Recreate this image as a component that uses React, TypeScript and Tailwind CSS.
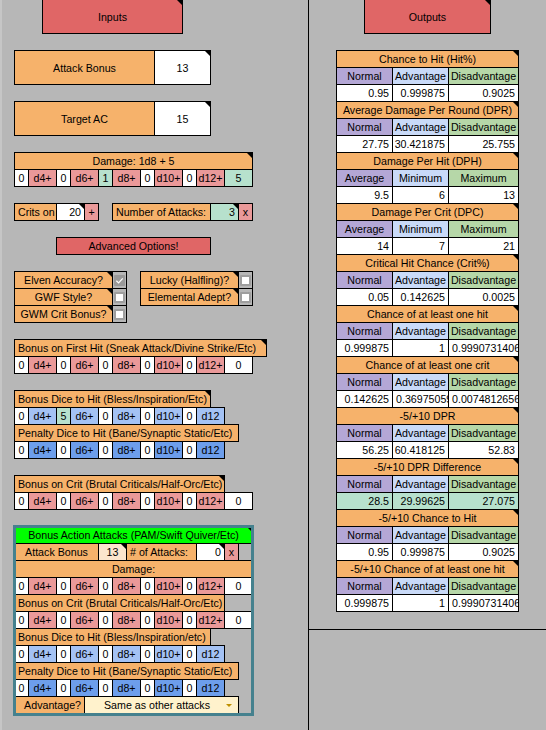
import React from 'react';

type Align = 'left' | 'center' | 'right';

type CellProps = {
  w: string;
  bg?: string;
  align?: Align;
  tall?: boolean;
  note?: boolean;
  children?: React.ReactNode;
};

// comment marker in the top-right corner of a cell
function Note() {
  return <span className="absolute right-0 top-0 h-0 w-0 border-l-[5px] border-t-[5px] border-l-transparent border-t-black" />;
}

// widths carry +1px so neighbouring borders overlap like sheet gridlines
function Cell({ w, bg = 'bg-white', align = 'center', tall, note, children }: CellProps) {
  const justify = align === 'left' ? 'justify-start' : align === 'right' ? 'justify-end' : 'justify-center';
  return (
    <div
      className={`relative -mr-px flex shrink-0 items-center overflow-hidden whitespace-nowrap border border-black px-[3px] pt-px ${tall ? 'h-[35px]' : 'h-[18px]'} ${w} ${bg} ${justify}`}
    >
      {children}
      {note && <Note />}
    </div>
  );
}

function Check({ checked }: { checked?: boolean }) {
  return (
    <div className="-mr-px flex h-[18px] w-[15px] shrink-0 items-center justify-center border border-black">
      {checked ? (
        <div className="flex h-[11px] w-[11px] items-center justify-center rounded-[1px] bg-[#999999]">
          <svg viewBox="0 0 10 10" className="h-[9px] w-[9px]">
            <path d="M1.5 5.2 L4 7.6 L8.6 2.6" stroke="white" strokeWidth="1.4" fill="none" />
          </svg>
        </div>
      ) : (
        <div className="h-[11px] w-[11px] rounded-[1px] border-2 border-[#9e9e9e] bg-white" />
      )}
    </div>
  );
}

const valBg = (v: string) => (v === '0' ? 'bg-white' : 'bg-[#b7e1cd]');

function DiceRow({ vals, dice, diceBg, last }: { vals: string[]; dice: string[]; diceBg: string; last?: string }) {
  return (
    <div className="flex h-[17px]">
      {dice.map((d, i) => (
        <React.Fragment key={d}>
          <Cell w="w-[15px]" bg={valBg(vals[i])}>{vals[i]}</Cell>
          <Cell w="w-[29px]" bg={diceBg}>{d}</Cell>
        </React.Fragment>
      ))}
      {last !== undefined && <Cell w="w-[29px]" bg={valBg(last)}>{last}</Cell>}
    </div>
  );
}

const DMG = ['d4+', 'd6+', 'd8+', 'd10+', 'd12+'];
const HIT = ['d4+', 'd6+', 'd8+', 'd10+', 'd12'];
const ZEROS = ['0', '0', '0', '0', '0'];

const Gap = () => <div className="h-[17px] shrink-0" />;

type Out = {
  title: string;
  heads: string[];
  values: { v: string; left?: boolean }[];
  mint?: boolean;
};

const NAD = ['Normal', 'Advantage', 'Disadvantage'];
const AMM = ['Average', 'Minimum', 'Maximum'];

const outputs: Out[] = [
  { title: 'Chance to Hit (Hit%)', heads: NAD, values: [{ v: '0.95' }, { v: '0.999875' }, { v: '0.9025' }] },
  { title: 'Average Damage Per Round (DPR)', heads: NAD, values: [{ v: '27.75' }, { v: '30.421875' }, { v: '25.755' }] },
  { title: 'Damage Per Hit (DPH)', heads: AMM, values: [{ v: '9.5' }, { v: '6' }, { v: '13' }] },
  { title: 'Damage Per Crit (DPC)', heads: AMM, values: [{ v: '14' }, { v: '7' }, { v: '21' }] },
  { title: 'Critical Hit Chance (Crit%)', heads: NAD, values: [{ v: '0.05' }, { v: '0.142625' }, { v: '0.0025' }] },
  { title: 'Chance of at least one hit', heads: NAD, values: [{ v: '0.999875' }, { v: '1' }, { v: '0.9990731406', left: true }] },
  {
    title: 'Chance of at least one crit',
    heads: NAD,
    values: [{ v: '0.142625' }, { v: '0.3697505926', left: true }, { v: '0.0074812656', left: true }],
  },
  { title: '-5/+10 DPR', heads: NAD, values: [{ v: '56.25' }, { v: '60.418125' }, { v: '52.83' }] },
  { title: '-5/+10 DPR Difference', heads: NAD, values: [{ v: '28.5' }, { v: '29.99625' }, { v: '27.075' }], mint: true },
  { title: '-5/+10 Chance to Hit', heads: NAD, values: [{ v: '0.95' }, { v: '0.999875' }, { v: '0.9025' }] },
  { title: '-5/+10 Chance of at least one hit', heads: NAD, values: [{ v: '0.999875' }, { v: '1' }, { v: '0.9990731406', left: true }] },
];

function OutTable({ t }: { t: Out }) {
  const bg = t.mint ? 'bg-[#b7e1cd]' : 'bg-white';
  return (
    <>
      <div className="flex h-[17px]">
        <Cell w="w-[183px]" bg="bg-[#f6b26b]" note>{t.title}</Cell>
      </div>
      <div className="flex h-[17px]">
        <Cell w="w-[57px]" bg="bg-[#b4a7d6]">{t.heads[0]}</Cell>
        <Cell w="w-[57px]" bg="bg-[#c9daf8]">{t.heads[1]}</Cell>
        <Cell w="w-[71px]" bg="bg-[#b6d7a8]">{t.heads[2]}</Cell>
      </div>
      <div className="flex h-[17px]">
        <Cell w="w-[57px]" bg={bg} align={t.values[0].left ? 'left' : 'right'}>{t.values[0].v}</Cell>
        <Cell w="w-[57px]" bg={bg} align={t.values[1].left ? 'left' : 'right'}>{t.values[1].v}</Cell>
        <Cell w="w-[71px]" bg={bg} align={t.values[2].left ? 'left' : 'right'}>{t.values[2].v}</Cell>
      </div>
    </>
  );
}

export default function App() {
  const orange = 'bg-[#f6b26b]';
  const pink = 'bg-[#ea9999]';
  return (
    <div className="flex h-[730px] w-[546px] overflow-hidden border-l-2 border-[#c6c6c6] bg-[#b7b7b7] font-['Liberation_Sans',Arial,sans-serif] text-[10.67px] leading-none text-black">
      {/* Inputs */}
      <div className="-mt-px flex w-[306px] shrink-0 flex-col pl-[12px]">
        <div className="flex h-[34px] pl-[28px]">
          <Cell w="w-[141px]" bg="bg-[#e06666]" tall note>Inputs</Cell>
        </div>
        <Gap />
        <div className="flex h-[34px]">
          <Cell w="w-[141px]" bg={orange} tall>Attack Bonus</Cell>
          <Cell w="w-[57px]" tall note>13</Cell>
        </div>
        <Gap />
        <div className="flex h-[34px]">
          <Cell w="w-[141px]" bg={orange} tall>Target AC</Cell>
          <Cell w="w-[57px]" tall note>15</Cell>
        </div>
        <Gap />
        <div className="flex h-[17px]">
          <Cell w="w-[239px]" bg={orange} note>Damage: 1d8 + 5</Cell>
        </div>
        <DiceRow vals={['0', '0', '1', '0', '0']} dice={DMG} diceBg={pink} last="5" />
        <Gap />
        <div className="flex h-[17px]">
          <Cell w="w-[43px]" bg={orange} align="left">Crits on</Cell>
          <Cell w="w-[29px]" align="right" note>20</Cell>
          <Cell w="w-[15px]" bg={pink}>+</Cell>
          <div className="w-[14px] shrink-0" />
          <Cell w="w-[99px]" bg={orange} align="left">Number of Attacks:</Cell>
          <Cell w="w-[29px]" bg="bg-[#b7e1cd]" align="right" note>3</Cell>
          <Cell w="w-[15px]" bg={pink}>x</Cell>
        </div>
        <Gap />
        <div className="flex h-[17px] pl-[42px]">
          <Cell w="w-[155px]" bg="bg-[#e06666]">Advanced Options!</Cell>
        </div>
        <Gap />
        <div className="flex h-[17px]">
          <Cell w="w-[99px]" bg={orange} note>Elven Accuracy?</Cell>
          <Check checked />
          <div className="w-[14px] shrink-0" />
          <Cell w="w-[99px]" bg={orange} note>Lucky (Halfling)?</Cell>
          <Check />
        </div>
        <div className="flex h-[17px]">
          <Cell w="w-[99px]" bg={orange} note>GWF Style?</Cell>
          <Check />
          <div className="w-[14px] shrink-0" />
          <Cell w="w-[99px]" bg={orange} note>Elemental Adept?</Cell>
          <Check />
        </div>
        <div className="flex h-[17px]">
          <Cell w="w-[99px]" bg={orange} note>GWM Crit Bonus?</Cell>
          <Check />
        </div>
        <Gap />
        <div className="flex h-[17px]">
          <Cell w="w-[253px]" bg={orange} align="left" note>Bonus on First Hit (Sneak Attack/Divine Strike/Etc)</Cell>
        </div>
        <DiceRow vals={ZEROS} dice={DMG} diceBg={pink} last="0" />
        <Gap />
        <div className="flex h-[17px]">
          <Cell w="w-[197px]" bg={orange} align="left" note>Bonus Dice to Hit (Bless/Inspiration/Etc)</Cell>
        </div>
        <DiceRow vals={['0', '5', '0', '0', '0']} dice={HIT} diceBg="bg-[#a4c2f4]" />
        <div className="flex h-[17px]">
          <Cell w="w-[225px]" bg={orange} align="left">Penalty Dice to Hit (Bane/Synaptic Static/Etc)</Cell>
        </div>
        <DiceRow vals={ZEROS} dice={HIT} diceBg="bg-[#6d9eeb]" />
        <Gap />
        <div className="flex h-[17px]">
          <Cell w="w-[211px]" bg={orange} align="left" note>Bonus on Crit (Brutal Criticals/Half-Orc/Etc)</Cell>
        </div>
        <DiceRow vals={ZEROS} dice={DMG} diceBg={pink} last="0" />
        <Gap />

        {/* bonus action block */}
        <div className="relative w-[238px]">
          <div className="flex h-[17px]">
            <Cell w="w-[239px]" bg="bg-[#00ff00]" note>Bonus Action Attacks (PAM/Swift Quiver/Etc)</Cell>
          </div>
          <div className="flex h-[17px]">
            <Cell w="w-[85px]" bg={orange}>Attack Bonus</Cell>
            <Cell w="w-[29px]" bg="bg-[#fce5cd]" note>13</Cell>
            <Cell w="w-[71px]" bg={orange} align="left"># of Attacks:</Cell>
            <Cell w="w-[29px]" align="right" note>0</Cell>
            <Cell w="w-[15px]" bg={pink}>x</Cell>
          </div>
          <div className="flex h-[17px]">
            <Cell w="w-[239px]" bg={orange}>Damage:</Cell>
          </div>
          <DiceRow vals={ZEROS} dice={DMG} diceBg={pink} last="0" />
          <div className="flex h-[17px]">
            <Cell w="w-[211px]" bg={orange} align="left">Bonus on Crit (Brutal Criticals/Half-Orc/Etc)</Cell>
          </div>
          <DiceRow vals={ZEROS} dice={DMG} diceBg={pink} last="0" />
          <div className="flex h-[17px]">
            <Cell w="w-[197px]" bg={orange} align="left">Bonus Dice to Hit (Bless/Inspiration/etc)</Cell>
          </div>
          <DiceRow vals={ZEROS} dice={HIT} diceBg="bg-[#a4c2f4]" />
          <div className="flex h-[17px]">
            <Cell w="w-[225px]" bg={orange} align="left">Penalty Dice to Hit (Bane/Synaptic Static/Etc)</Cell>
          </div>
          <DiceRow vals={ZEROS} dice={HIT} diceBg="bg-[#6d9eeb]" />
          <div className="flex h-[17px]">
            <Cell w="w-[71px]" bg={orange} align="right">Advantage?</Cell>
            <div className="-mr-px flex h-[18px] w-[155px] shrink-0 items-center border border-black bg-[#fff2cc] px-[3px] pt-px">
              <span className="flex-1 text-center">Same as other attacks</span>
              <span className="mr-[3px] h-0 w-0 border-l-[3px] border-r-[3px] border-t-[3px] border-l-transparent border-r-transparent border-t-[#bf9000]" />
            </div>
          </div>
          <div className="pointer-events-none absolute -bottom-[3px] -left-px -right-[2px] -top-px border-[3px] border-[#45818e]" />
        </div>
      </div>

      {/* Outputs */}
      <div className="flex w-[238px] shrink-0 flex-col border-l border-black">
        <div className="-mt-px flex h-[630px] shrink-0 flex-col pl-[27px]">
          <div className="flex h-[34px] pl-[28px]">
            <Cell w="w-[127px]" bg="bg-[#e06666]" tall note>Outputs</Cell>
          </div>
          <Gap />
          {outputs.map((t) => (
            <OutTable key={t.title} t={t} />
          ))}
        </div>
        <div className="flex-1 border-t border-black" />
      </div>
    </div>
  );
}
